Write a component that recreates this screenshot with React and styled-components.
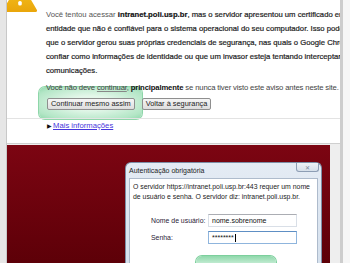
import React from 'react';
import styled, { createGlobalStyle } from 'styled-components';

const GlobalStyle = createGlobalStyle`
  html, body {
    margin: 0;
    padding: 0;
    background: #ebebeb;
  }
  body {
    font-family: "Liberation Sans", Arial, sans-serif;
  }
`;

const Window = styled.div`
  display: flex;
  width: 350px;
  height: 263px;
  overflow: hidden;
  background: #ebebeb;
`;

const LeftFrame = styled.div`
  width: 6px;
  flex-shrink: 0;
  background: #e6e6e6;
  border-right: 1px solid #c8c8c8;
`;

const Main = styled.div`
  width: 333px;
  flex-shrink: 0;
  display: flex;
  flex-direction: column;
`;

const Scrollbar = styled.div`
  width: 7px;
  flex-shrink: 0;
  background: #f6f6f6;
  border-left: 3px solid #cdcdcd;
`;

const Page = styled.div`
  position: relative;
  height: 143px;
  flex-shrink: 0;
  display: flex;
  background: #fff;
  border-bottom: 1px solid #cfcfcf;
  overflow: hidden;
`;

const IconCol = styled.div`
  width: 39px;
  flex-shrink: 0;
  position: relative;
  z-index: 1;
`;

const TextCol = styled.div`
  position: relative;
  z-index: 1;
  flex: 1;
  min-width: 0;
  padding-top: 8px;
  font-size: 7.7px;
  color: #1c1c1c;
`;

const Para = styled.p`
  margin: 0 0 ${(p) => p.$after}px;
  line-height: 14px;
  white-space: nowrap;
  color: ${(p) => p.$color || '#1c1c1c'};
  letter-spacing: ${(p) => p.$tight || 0}px;
  -webkit-text-stroke: ${(p) => (p.$heavy ? '0.2px #1c1c1c' : '0')};
`;

const Soft = styled.span`
  color: #555;
  -webkit-text-stroke: 0;
`;

const Strong = styled.b`
  font-weight: bold;
  color: #111;
`;

const Dotted = styled.span`
  text-decoration: underline;
  text-decoration-color: #888;
`;

const Highlight = styled.div`
  position: absolute;
  left: 32px;
  top: 87px;
  width: 103px;
  height: 32px;
  border-radius: 6px;
  background: radial-gradient(ellipse at center, #e4f7ea 30%, #b3e6c6 80%, #8fd8ab 100%);
  box-shadow: 0 0 0 1px #8ed6a9;
  z-index: 0;
`;

const ButtonRow = styled.div`
  display: flex;
  gap: 7px;
  margin-left: 1px;
`;

const Button = styled.button`
  height: 12px;
  padding: 0 3px;
  font-family: "Liberation Sans", Arial, sans-serif;
  font-size: 7.4px;
  line-height: 10px;
  color: #222;
  background: linear-gradient(#f6f6f6, #dddddd);
  border: 1px solid #8f8f8f;
  border-radius: 2px;
`;

const LinkRow = styled.div`
  margin-top: 8px;
  margin-left: -39px;
  padding-left: 40px;
  border-top: 1px solid #e3e3e3;
  line-height: 14px;
  display: flex;
  align-items: center;
  gap: 1px;
`;

const Arrow = styled.span`
  font-size: 6px;
  color: #111;
`;

const Link = styled.a`
  color: #4636dc;
  text-decoration: underline;
`;

const Below = styled.div`
  flex: 1;
  display: flex;
  padding-top: 1px;
  background: #eeeeee;
  min-height: 0;
`;

const RedPanel = styled.div`
  width: 323px;
  flex-shrink: 0;
  background: linear-gradient(#7c0512, #5d0008);
  padding: 17px 8px 0 118px;
  box-sizing: border-box;
  overflow: hidden;
`;

const Dialog = styled.div`
  width: 197px;
  box-sizing: border-box;
  height: 120px;
  padding: 0 3px;
  background: linear-gradient(#e4ebf4, #d3dfec);
  border: 1px solid #7d8ea6;
  border-bottom: none;
  border-radius: 6px 6px 0 0;
  font-family: "Liberation Sans", Arial, sans-serif;
`;

const TitleBar = styled.div`
  height: 15px;
  display: flex;
  justify-content: space-between;
  align-items: flex-start;
`;

const Title = styled.span`
  font-size: 7px;
  line-height: 7px;
  margin-top: 4px;
  color: #1d1d1d;
`;

const CloseButton = styled.div`
  width: 21px;
  height: 8px;
  margin-right: -1px;
  border: 1px solid #8d9db4;
  border-top: none;
  border-radius: 0 0 3px 3px;
  background: linear-gradient(#eef2f7, #d6dfea);
  display: flex;
  align-items: center;
  justify-content: center;
  font-size: 6px;
  color: #7a869a;
`;

const Body = styled.div`
  background: #fff;
  border: 1px solid #aebbcc;
  padding: 3px 3px 0;
  height: 100px;
  font-size: 6.9px;
  color: #222;
`;

const Message = styled.p`
  margin: 0;
  line-height: 10px;
  white-space: nowrap;
`;

const Form = styled.div`
  display: grid;
  grid-template-columns: 57px 89px;
  row-gap: 4px;
  align-items: center;
  margin: 12px 0 0 18px;
`;

const Label = styled.span`
  color: #2a2236;
`;

const Field = styled.div`
  height: 13px;
  box-sizing: border-box;
  padding: 0 3px;
  display: flex;
  align-items: center;
  border: 1px solid ${(p) => (p.$focused ? '#8fb5dd' : '#d9dfe7')};
  border-top-color: ${(p) => (p.$focused ? '#5e8fc4' : '#abadb3')};
  color: #111;
  font-size: 7px;
`;

const Caret = styled.span`
  width: 1px;
  height: 8px;
  margin-left: 1px;
  background: #000;
`;

const OkGlow = styled.div`
  width: 80px;
  height: 14px;
  margin: 12px 0 0 63px;
  border-radius: 6px 6px 0 0;
  background: linear-gradient(#8fd8ab, #c9eed7 60%, #e4f7ea);
  box-shadow: 0 0 0 1px #7ccf9c;
`;

const RightGutter = styled.div`
  flex: 1;
  background: #eeeeee;
`;

const WarningIcon = () => (
  <svg width="39" height="14" viewBox="0 0 39 14">
    <defs>
      <linearGradient id="warn" x1="0" y1="0" x2="0" y2="1">
        <stop offset="0" stopColor="#f7c521" />
        <stop offset="1" stopColor="#eaa70c" />
      </linearGradient>
    </defs>
    <path
      d="M13 -16 L28.5 10.5 L-2.5 10.5 Z"
      fill="url(#warn)"
      stroke="url(#warn)"
      strokeWidth="3"
      strokeLinejoin="round"
    />
    <rect x="11.5" y="-12" width="3" height="10" rx="1.5" fill="#fff" />
    <rect x="11.2" y="1" width="3.6" height="4.5" rx="1.6" fill="#fff" />
  </svg>
);

const App = () => (
  <>
    <GlobalStyle />
    <Window>
      <LeftFrame />
      <Main>
        <Page>
          <Highlight />
          <IconCol>
            <WarningIcon />
          </IconCol>
          <TextCol>
            <Para $after={3} $heavy>
              <Soft>Você tentou acessar </Soft>
              <Strong>intranet.poli.usp.br</Strong>, mas o servidor apresentou um certificado emitido por uma
              <br />
              entidade que não é confiável para o sistema operacional do seu computador. Isso pode significar
              <br />
              que o servidor gerou suas próprias credenciais de segurança, nas quais o Google Chrome não pode
              <br />
              confiar como informações de identidade ou que um invasor esteja tentando interceptar suas
              <br />
              comunicações.
            </Para>
            <Para $after={3} $color="#444" $tight={-0.15}>
              Você não deve <Dotted>continuar</Dotted>, <Strong>principalmente</Strong> se nunca tiver visto este aviso
              antes neste site.
            </Para>
            <ButtonRow>
              <Button>Continuar mesmo assim</Button>
              <Button>Voltar à segurança</Button>
            </ButtonRow>
            <LinkRow>
              <Arrow>▶</Arrow>
              <Link href="#">Mais informações</Link>
            </LinkRow>
          </TextCol>
        </Page>
        <Below>
          <RedPanel>
            <Dialog>
              <TitleBar>
                <Title>Autenticação obrigatória</Title>
                <CloseButton>✕</CloseButton>
              </TitleBar>
              <Body>
                <Message>O servidor https://intranet.poli.usp.br:443 requer um nome</Message>
                <Message>de usuário e senha. O servidor diz: intranet.poli.usp.br.</Message>
                <Form>
                  <Label>Nome de usuário:</Label>
                  <Field>nome.sobrenome</Field>
                  <Label>Senha:</Label>
                  <Field $focused>
                    ********
                    <Caret />
                  </Field>
                </Form>
                <OkGlow />
              </Body>
            </Dialog>
          </RedPanel>
          <RightGutter />
        </Below>
      </Main>
      <Scrollbar />
    </Window>
  </>
);

export default App;
